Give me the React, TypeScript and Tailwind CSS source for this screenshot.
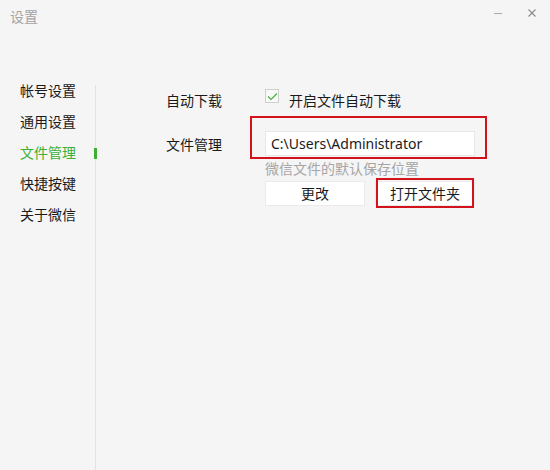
import React from "react";

const cjk = { fontFamily: '"Noto Sans CJK SC", "Noto Sans", sans-serif' };

export default function App() {
  const items = ["帐号设置", "通用设置", "文件管理", "快捷按键", "关于微信"];
  return (
    <div className="w-[550px] h-[470px] bg-[#f5f5f5] flex flex-col overflow-hidden" style={cjk}>
      <div className="h-[75px] flex justify-between items-start">
        <div className="pl-[10px] pt-[6px] text-[14px] leading-[20px] text-[#a3a3a3]">设置</div>
        <div className="flex items-start pt-[9px] pr-[14px] gap-[26px]">
          <svg width="8" height="8" viewBox="0 0 8 8">
            <line x1="0" y1="4.5" x2="8" y2="4.5" stroke="#a8a8a8" strokeWidth="1" />
          </svg>
          <svg width="8" height="8" viewBox="0 0 8 8">
            <line x1="0.5" y1="0.5" x2="7.5" y2="7.5" stroke="#8a8a8a" strokeWidth="1.1" />
            <line x1="7.5" y1="0.5" x2="0.5" y2="7.5" stroke="#8a8a8a" strokeWidth="1.1" />
          </svg>
        </div>
      </div>
      <div className="flex flex-1">
        <div className="w-[95px] flex flex-col">
          {items.map((t, i) => (
            <div
              key={t}
              className={
                "h-[31px] flex items-center pl-[20px] text-[14px] " +
                (i === 2 ? "text-[#3db034]" : "text-[#1a1a1a]")
              }
            >
              {t}
            </div>
          ))}
        </div>
        <div className="w-px bg-[#e2e2e2] mt-[10px] relative">
          <div className="absolute left-[-1px] top-[63px] w-[3px] h-[11px] bg-[#3db034]" />
        </div>
        <div className="flex-1 pl-[70px] pt-[14px] flex flex-col">
          <div className="flex items-start h-[22px]">
            <div className="w-[99px] text-[14px] leading-[22px] text-[#1a1a1a]">自动下载</div>
            <div className="flex items-start">
              <div className="w-[14px] h-[14px] border border-[#cfcfcf] bg-[#f9f9f9] flex items-center justify-center">
                <svg width="11" height="9" viewBox="0 0 11 9">
                  <path d="M1 4.5 L4 7.5 L10 1.5" fill="none" stroke="#3db034" strokeWidth="1.1" />
                </svg>
              </div>
              <div className="ml-[10px] text-[14px] leading-[22px] text-[#1a1a1a]">开启文件自动下载</div>
            </div>
          </div>
          <div className="flex items-center mt-[20px]">
            <div className="w-[99px] text-[14px] leading-[22px] text-[#1a1a1a]">文件管理</div>
            <div className="relative">
              <div
                className="w-[210px] h-[25px] bg-white border border-[#e8e8e8] flex items-center pl-[5px] text-[14px] text-[#1a1a1a]"
                style={{ fontFamily: '"Noto Sans", "Open Sans", sans-serif' }}
              >
                C:\Users\Administrator
              </div>
              <div className="absolute left-[-15px] right-[-12px] top-[-15px] bottom-[-3px] border-2 border-[#d4121b]" />
            </div>
          </div>
          <div className="pl-[99px] flex flex-col">
            <div className="text-[14px] leading-[16px] mt-[4px] text-[#a6a6a6]">微信文件的默认保存位置</div>
            <div className="flex gap-[10px] mt-[5px]">
              <div className="w-[100px] h-[25px] bg-white border border-[#ebebeb] flex items-center justify-center text-[14px] text-[#1a1a1a]">
                更改
              </div>
              <div className="relative w-[100px] h-[25px] bg-white border border-[#ebebeb] flex items-center justify-center text-[14px] text-[#1a1a1a]">
                打开文件夹
                <div className="absolute left-[0px] right-[0px] top-[-4px] bottom-[-3px] border-2 border-[#d4121b]" />
              </div>
            </div>
          </div>
        </div>
      </div>
    </div>
  );
}
